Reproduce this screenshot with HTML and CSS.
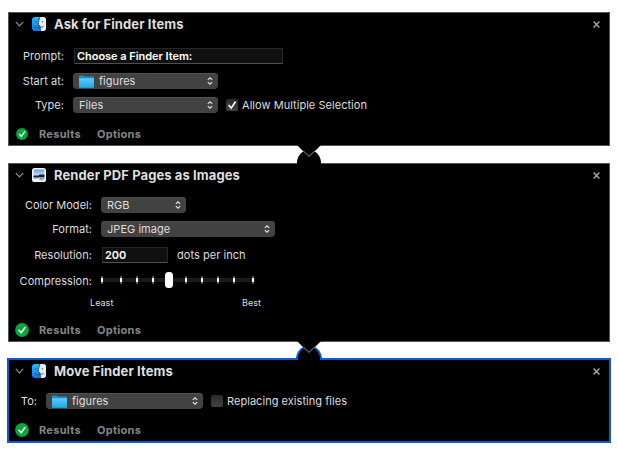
FILE: index.html
```html
<!DOCTYPE html>
<html lang="en">
<head>
<meta charset="utf-8">
<title>Workflow</title>
<link rel="stylesheet" href="styles.css">
</head>
<body>
<svg class="defs" aria-hidden="true">
  <defs>
    <linearGradient id="face" x1="0" y1="0" x2="0" y2="1"><stop offset="0" stop-color="#20bdfc"/><stop offset="1" stop-color="#1474ea"/></linearGradient>
    <linearGradient id="fold" x1="0" y1="0" x2="0" y2="1"><stop offset="0" stop-color="#5ccdf9"/><stop offset="1" stop-color="#22a5e4"/></linearGradient>
    <linearGradient id="sky" x1="0" y1="0" x2="0" y2="1"><stop offset="0" stop-color="#6f9fe2"/><stop offset="1" stop-color="#c6dcf8"/></linearGradient>
  </defs>
  <symbol id="finder" viewBox="0 0 14 14">
    <rect width="14" height="14" rx="3" fill="url(#face)"/>
    <path d="M7.8 0H11a3 3 0 0 1 3 3v8a3 3 0 0 1-3 3H8.6Q8 11.5 8 8.6H6.2Q6.4 3.6 7.8 0Z" fill="#e6edf5"/>
    <path d="M3.9 4v1.5M10.3 4v1.5M2.4 9.2Q7 12.7 11.6 9.2M7.8.2Q6.4 3.8 6.2 8.6H8Q8 11.5 8.6 13.8" fill="none" stroke="#164474" stroke-width=".85"/>
  </symbol>
  <symbol id="preview" viewBox="0 0 14 14">
    <rect width="14" height="14" rx="2.6" fill="#f5f5f4"/>
    <path d="M1.7 1.4h10.6v6H1.7z" fill="url(#sky)"/>
    <path d="M1.5 7.4h5l1-.8h5v3h-11z" fill="#15233b"/>
    <path d="M1.5 9.2h5v1.2h-5z" fill="#527cb8"/>
    <path d="M7 9.6h5.5v2.6H7z" fill="#bfc7c9"/><path d="M8 10h1.2v1H8zM10.5 9.6h1.2v1h-1.2zM9.4 11.5h1.2v1H9.4z" fill="#59656b"/>
  </symbol>
  <symbol id="folder" viewBox="0 0 15 13">
    <path d="M0 1.5Q0 .5 1 .5h3.8l1.2 1h8q1 0 1 1V12q0 .8-.8.8H.8Q0 12.8 0 12Z" fill="#1793cd"/>
    <path d="M0 3.2h15V12q0 .8-.8.8H.8Q0 12.8 0 12Z" fill="url(#fold)"/>
  </symbol>
  <symbol id="chevron" viewBox="0 0 9 6"><path d="M.8.8 4.5 4.8 8.2.8" fill="none" stroke="#929292" stroke-width="1.2"/></symbol>
  <symbol id="close" viewBox="0 0 7 7"><path d="m.6.6 5.8 5.8M6.4.6.6 6.4" stroke="#a6a6a6" stroke-width="1.4"/></symbol>
  <symbol id="updown" viewBox="0 0 6 8"><path d="M.8 2.9 3 .8l2.2 2.1M.8 5.1 3 7.2l2.2-2.1" fill="none" stroke="#e2e2e2" stroke-width="1.1"/></symbol>
  <symbol id="ok" viewBox="0 0 14 14"><circle cx="7" cy="7" r="6.9" fill="#04a63e"/><path d="m4 7.3 2.2 2.5L10 4.5" fill="none" stroke="#fff" stroke-width="1.5" stroke-linecap="round"/></symbol>
  <symbol id="dome" viewBox="0 0 28 20"><path d="M2 19V16.7C2.6 12 5.5 7.5 9 6.6h10c3.5.9 6.4 5.4 7 10.1V19Z" fill="#000"/></symbol>
  <symbol id="notch" viewBox="0 0 28 20">
    <path d="M2 0H26L24.5 1.4 20 6l-6 5.4L8 6 3.5 1.4Z" fill="#000"/>
    <path d="m8.8 6.4 5.2 5 5.2-5" fill="none" stroke="#a6a6a6" stroke-width=".9"/>
  </symbol>
</svg>

<main class="workflow">
  <section class="card ask">
    <header class="head"><svg class="chevron"><use href="#chevron"/></svg><svg class="app"><use href="#finder"/></svg><h2>Ask for Finder Items</h2><svg class="close"><use href="#close"/></svg></header>
    <div class="form">
      <div class="row prompt"><label>Prompt:</label><div class="field">Choose a Finder Item:</div></div>
      <div class="row start"><label>Start at:</label><div class="select"><svg class="folder"><use href="#folder"/></svg><span>figures</span><svg class="updown"><use href="#updown"/></svg></div></div>
      <div class="row"><label>Type:</label><div class="select"><span>Files</span><svg class="updown"><use href="#updown"/></svg></div><div class="check"><svg viewBox="0 0 12 12"><path d="m3 6.4 2.2 2.7L9.3 3" fill="none" stroke="#fff" stroke-width="1.6" stroke-linecap="round"/></svg></div><span class="caption">Allow Multiple Selection</span></div>
    </div>
    <footer class="foot"><svg class="ok small"><use href="#ok"/></svg><span class="results">Results</span><span class="options">Options</span></footer>
    <svg class="link"><use href="#dome"/><use href="#notch"/></svg>
  </section>

  <section class="card render">
    <header class="head"><svg class="chevron"><use href="#chevron"/></svg><svg class="app"><use href="#preview"/></svg><h2>Render PDF Pages as Images</h2><svg class="close"><use href="#close"/></svg></header>
    <div class="form">
      <div class="row"><label>Color Model:</label><div class="select model"><span>RGB</span><svg class="updown"><use href="#updown"/></svg></div></div>
      <div class="row format"><label>Format:</label><div class="select"><span>JPEG image</span><svg class="updown"><use href="#updown"/></svg></div></div>
      <div class="row resolution"><label>Resolution:</label><div class="field">200</div><span class="caption">dots per inch</span></div>
      <div class="row compression"><label>Compression:</label>
        <svg class="slider" viewBox="0 0 154 16"><path d="M0 8h154" stroke="#1c1c1c" stroke-width="4"/><path d="M1 4v8M20 4v8M36 4v8M52 4v8M85 4v8M101 4v8M117 4v8M133 4v8M152 4v8" stroke="#505050" stroke-width="2"/><path d="M1 6v4M20 6v4M36 6v4M52 6v4M85 6v4M101 6v4M117 6v4M133 6v4M152 6v4" stroke="#fff" stroke-width="2"/><rect x="64" width="8" height="16" rx="3.5" fill="#fff"/></svg>
      </div>
      <div class="scale"><span>Least</span><span>Best</span></div>
    </div>
    <footer class="foot"><svg class="ok"><use href="#ok"/></svg><span class="results">Results</span><span class="options">Options</span></footer>
    <svg class="link to-selected"><use href="#dome"/><path d="M2 19V16.7C2.6 12 5.5 7.5 9 6.6M19 6.6c3.5.9 6.4 5.4 7 10.1V19" fill="none" stroke="#0b5bd3" stroke-width="2"/><use href="#notch"/></svg>
  </section>

  <section class="card move">
    <header class="head"><svg class="chevron"><use href="#chevron"/></svg><svg class="app"><use href="#finder"/></svg><h2>Move Finder Items</h2><svg class="close"><use href="#close"/></svg></header>
    <div class="form">
      <div class="row"><label>To:</label><div class="select"><svg class="folder"><use href="#folder"/></svg><span>figures</span><svg class="updown"><use href="#updown"/></svg></div><div class="check"></div><span class="caption">Replacing existing files</span></div>
    </div>
    <footer class="foot"><svg class="ok"><use href="#ok"/></svg><span class="results">Results</span><span class="options">Options</span></footer>
  </section>
</main>
</body>
</html>
```
FILE: styles.css
```css
* { box-sizing: border-box; }
body {
  margin: 0;
  background: #fff;
  color: #dedede;
  font: 11px/16px Inter, "Liberation Sans", sans-serif;
  letter-spacing: .04px;
  white-space: nowrap;
}
svg { display: block; flex: none; }
.defs { position: absolute; width: 0; height: 0; }
.workflow { padding: 12px 8px 0; }
.card {
  position: relative;
  width: 602px;
  display: flex;
  flex-direction: column;
  background: #000;
  border: 1px solid #555;
}
.ask { height: 134px; margin-bottom: 17px; }
.render { height: 179px; margin-bottom: 16px; }
.move { width: 604px; height: 85px; margin-left: -1px; border: 2px solid #0b5bd3; }

.head { display: flex; align-items: center; height: 23px; padding: 0 9px 0 6px; }
.ask .head { height: 22px; }
.render .head { height: 22px; }
.move .head { height: 22px; }
.chevron { width: 9px; height: 6px; margin-right: 8px; }
.app { width: 14px; height: 14px; margin-right: 8px; }
h2 { margin: 0; font-size: 13px; line-height: 20px; font-weight: 700; letter-spacing: .1px; }
.close { width: 7px; height: 7px; margin-left: auto; }

.form { flex: 1; }
.row { display: flex; align-items: center; height: 16px; margin-bottom: 8px; }
.row label { text-align: right; margin-right: 9px; }
.ask .form { padding-top: 13px; }
.ask label { width: 55px; }
.prompt { margin-bottom: 9px; }
.render .form { padding-top: 11px; }
.render label { width: 83px; }
.move .form { padding-top: 11px; }
.move label { width: 28px; }

.field {
  width: 209px;
  height: 16px;
  margin-left: 1px;
  padding-left: 2px;
  background: #101010;
  border: 1px solid #262626;
  border-bottom-color: #505050;
  color: #fff;
  font-weight: 600;
  line-height: 15px;
  letter-spacing: -.04px;
}
.select {
  display: flex;
  align-items: center;
  width: 145px;
  height: 16px;
  padding: 0 5px 0 6px;
  border-radius: 4px;
  background: #424242;
  box-shadow: inset 0 1px #515151;
}
.updown { width: 6px; height: 8px; margin-left: auto; }
.folder { width: 15px; height: 13px; margin-right: 5px; }
.move .select { width: 157px; }
.render .model { width: 85px; }
.format .select { width: 174px; }
.format { margin-bottom: 10px; }
.resolution { margin-bottom: 9px; }
.resolution .field { width: 66px; letter-spacing: 0; }
.resolution .caption { margin-left: 9px; }
.compression label { padding-top: 2px; }
.check {
  width: 12px;
  height: 12px;
  margin-left: 8px;
  border-radius: 2px;
  background: linear-gradient(#292929, #424242);
}
.check svg { width: 12px; height: 12px; }
.caption { margin-left: 4px; }
.slider { width: 154px; height: 16px; }
.scale {
  display: flex;
  justify-content: space-between;
  width: 171px;
  margin-left: 81px;
  margin-top: -1px;
  font-size: 9px;
}
.foot {
  display: flex;
  align-items: center;
  height: 22px;
  padding-left: 7px;
  color: #858585;
  font-weight: 700;
}
.ok { width: 14px; height: 14px; margin-left: -1px; margin-right: 10px; }
.ok.small { width: 12px; height: 12px; margin-left: 0; margin-right: 11px; }
.results { width: 58px; letter-spacing: .28px; }
.options { letter-spacing: .28px; }
.link { position: absolute; left: 286px; top: 132px; width: 28px; height: 20px; z-index: 1; }
.to-selected { top: 177px; }
```
